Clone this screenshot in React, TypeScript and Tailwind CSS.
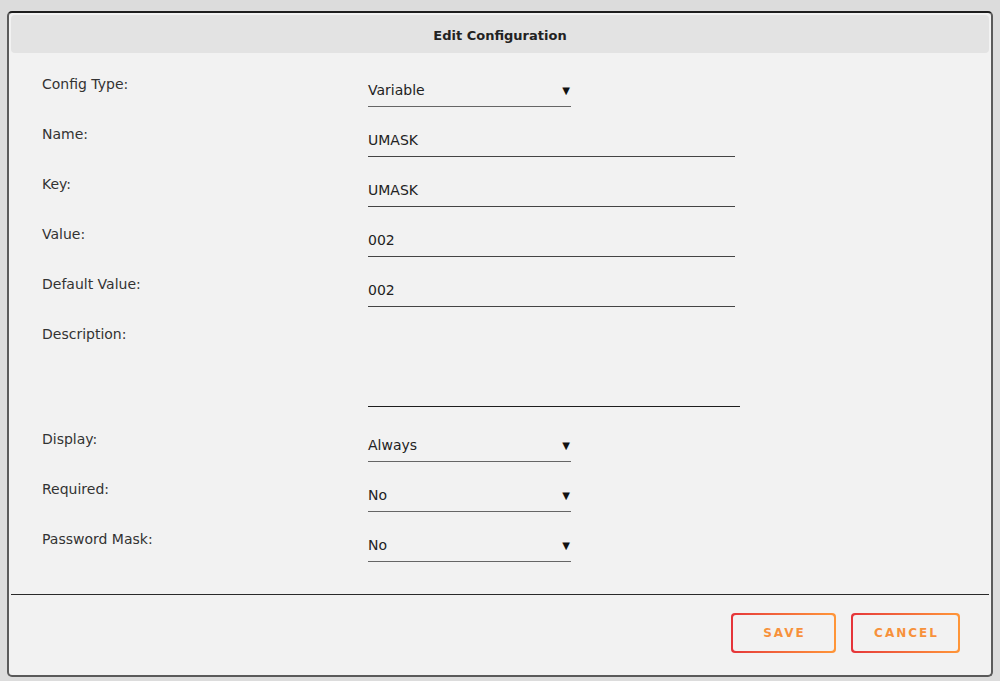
import { useState } from "react";

type Field =
  | { kind: "select"; label: string; value: string }
  | { kind: "text"; label: string; value: string };

const topFields: Field[] = [
  { kind: "select", label: "Config Type:", value: "Variable" },
  { kind: "text", label: "Name:", value: "UMASK" },
  { kind: "text", label: "Key:", value: "UMASK" },
  { kind: "text", label: "Value:", value: "002" },
  { kind: "text", label: "Default Value:", value: "002" },
];

const bottomFields: Field[] = [
  { kind: "select", label: "Display:", value: "Always" },
  { kind: "select", label: "Required:", value: "No" },
  { kind: "select", label: "Password Mask:", value: "No" },
];

function FieldRow({ field }: { field: Field }) {
  const [value, setValue] = useState(field.value);

  return (
    <div className="flex h-[50px] items-start">
      <label className="w-[326px] shrink-0 pt-[1px] text-[14px] leading-5 text-[#333]">
        {field.label}
      </label>
      {field.kind === "select" ? (
        <div className="flex h-[34px] w-[203px] items-center justify-between border-b border-[#666] pt-[1px] text-[14px] text-[#222]">
          <span>{value}</span>
          <span className="pr-[1px] text-[10px] text-[#111]">▼</span>
        </div>
      ) : (
        <input
          value={value}
          onChange={(e) => setValue(e.target.value)}
          className="h-[34px] w-[367px] border-b border-[#444] bg-transparent pt-[1px] text-[14px] text-[#222] outline-none"
        />
      )}
    </div>
  );
}

function GradientButton({ label, width }: { label: string; width: string }) {
  return (
    <button
      className={`rounded-[4px] bg-gradient-to-r from-[#e5333a] to-[#ff9638] p-[2px] ${width}`}
    >
      <span className="flex h-[36px] items-center justify-center rounded-[3px] bg-[#f2f2f2] pl-[2px] text-[12px] font-bold tracking-[2px] text-[#f7913b]">
        {label}
      </span>
    </button>
  );
}

export default function App() {
  return (
    <div
      className="h-[681px] w-full bg-[#dcdcdc] pt-[11px] pl-[7px]"
      style={{ fontFamily: '"DejaVu Sans", Verdana, sans-serif' }}
    >
      <div className="flex h-[666px] w-[986px] flex-col rounded-[5px] border-2 border-[#5a5a5a] border-t-[#1e1e1e] bg-[#f2f2f2]">
        {/* Header */}
        <div className="mx-[2px] mt-[2px] flex h-[38px] items-center justify-center rounded-[4px] bg-[#e3e3e3] pt-[3px] text-[13px] font-bold text-[#222]">
          Edit Configuration
        </div>

        {/* Form */}
        <div className="flex flex-col pt-[20px] pl-[33px]">
          {topFields.map((f) => (
            <FieldRow key={f.label} field={f} />
          ))}

          <div className="flex h-[105px] items-start">
            <label className="w-[326px] shrink-0 pt-[1px] text-[14px] leading-5 text-[#333]">
              Description:
            </label>
            <textarea className="h-[84px] w-[372px] resize-none border-b border-[#1e1e1e] bg-transparent text-[14px] text-[#222] outline-none" />
          </div>

          {bottomFields.map((f) => (
            <FieldRow key={f.label} field={f} />
          ))}
        </div>

        {/* Footer */}
        <div className="mx-[2px] mt-[16px] border-t border-[#2a2a2a]" />
        <div className="flex justify-end gap-[15px] pt-[18px] pr-[31px]">
          <GradientButton label="SAVE" width="w-[105px]" />
          <GradientButton label="CANCEL" width="w-[109px]" />
        </div>
      </div>
    </div>
  );
}
